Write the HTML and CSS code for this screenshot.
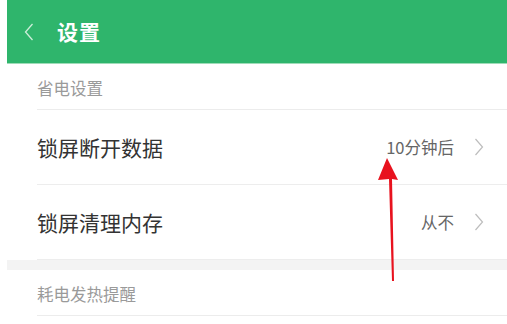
FILE: index.html
```html
<!DOCTYPE html>
<html lang="zh">
<head>
<meta charset="utf-8">
<link rel="stylesheet" href="styles.css">
</head>
<body>
<div class="page">
  <header class="topbar">
    <svg class="back" width="10" height="18" viewBox="0 0 10 18"><path d="M8.5 1 L1.5 9 L8.5 17" fill="none" stroke="#cdeed9" stroke-width="1.3"/></svg>
    <span class="title">设置</span>
  </header>
  <div class="section-head">省电设置</div>
  <div class="row">
    <span class="label">锁屏断开数据</span>
    <span class="value">10分钟后</span>
    <svg class="chev" width="10" height="18" viewBox="0 0 10 18"><path d="M1.5 1 L8.5 9 L1.5 17" fill="none" stroke="#bdbdbd" stroke-width="1.2"/></svg>
  </div>
  <div class="row">
    <span class="label">锁屏清理内存</span>
    <span class="value">从不</span>
    <svg class="chev" width="10" height="18" viewBox="0 0 10 18"><path d="M1.5 1 L8.5 9 L1.5 17" fill="none" stroke="#bdbdbd" stroke-width="1.2"/></svg>
  </div>
  <div class="gap"></div>
  <div class="section-head">耗电发热提醒</div>
</div>
<svg class="arrow" width="40" height="130" viewBox="0 0 40 130"><path d="M17 0 L28 22 L22 21 L24 123 L22 123 L19 21 L8 22 Z" fill="#e8121e"/></svg>
</body>
</html>
```
FILE: styles.css
```css
html, body {
  margin: 0;
  padding: 0;
  background: #ffffff;
}
body {
  width: 507px;
  height: 324px;
  overflow: hidden;
  position: relative;
  font-family: "Noto Sans CJK SC", "Noto Sans", sans-serif;
}
.page {
  margin-left: 7px;
}
.topbar {
  height: 64px;
  background: #2fb56c;
  display: flex;
  align-items: center;
  padding-left: 17px;
  box-sizing: border-box;
  border-bottom: 1px solid #9fdcb8;
}
.back {
  display: block;
  margin-right: 23px;
  margin-top: 1px;
}
.title {
  color: #ffffff;
  font-size: 21px;
  font-weight: 700;
  line-height: 1;
  letter-spacing: 1px;
}
.section-head {
  height: 46px;
  margin-left: 30px;
  display: flex;
  align-items: center;
  font-size: 16.5px;
  color: #9a9a9a;
  border-bottom: 1px solid #ececec;
  box-sizing: border-box;
  padding-top: 2px;
}
.row {
  height: 75px;
  margin-left: 30px;
  display: flex;
  align-items: center;
  border-bottom: 1px solid #ededed;
  box-sizing: border-box;
  padding-right: 23px;
}
.row:last-of-type {
  border-bottom: none;
}
.label {
  font-size: 21px;
  color: #333333;
  flex: 1;
}
.value {
  font-size: 16.5px;
  color: #666666;
  margin-right: 20px;
}
.chev {
  display: block;
}
.gap {
  height: 10px;
  background: #f3f3f3;
}
.arrow {
  position: absolute;
  left: 370px;
  top: 158px;
}
```
